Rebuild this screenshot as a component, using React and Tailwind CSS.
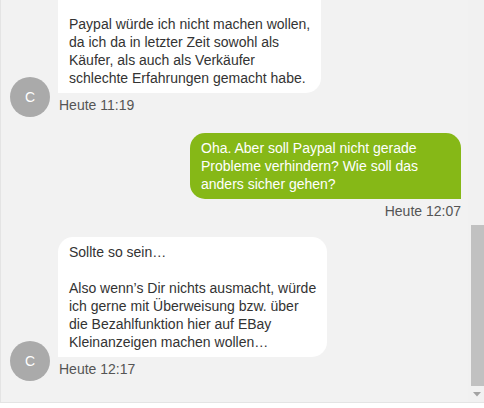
import React from 'react';

const Avatar = () => (
  <div className="w-[40px] h-[40px] shrink-0 rounded-full bg-[#aaaaaa] flex items-center justify-center text-white text-[14px]">
    C
  </div>
);

const Incoming = ({ lines, time, className = '', topPad = 'pt-[6px]', rounded = 'rounded-[15px] rounded-bl-none' }) => (
  <div className={`flex items-end gap-[8px] ${className}`}>
    <Avatar />
    <div className="flex flex-col items-start pb-[3px]">
      <div className={`bg-white text-[#333333] ${topPad} pb-[6px] px-[11px] ${rounded}`}>
        {lines.map((line, i) => (
          <div key={i} className="h-[18px] whitespace-nowrap">
            {line}
          </div>
        ))}
      </div>
      <div className="mt-[3px] ml-[1px] text-[#555555]">{time}</div>
    </div>
  </div>
);

const Outgoing = ({ lines, time, className = '' }) => (
  <div className={`flex flex-col items-end pr-[1px] ${className}`}>
    <div className="w-[271px] bg-[#86b817] text-white py-[6px] px-[11px] rounded-[15px] rounded-br-none">
      {lines.map((line, i) => (
        <div key={i} className="h-[18px] whitespace-nowrap">
          {line}
        </div>
      ))}
    </div>
    <div className="mt-[3px] text-[#555555]">{time}</div>
  </div>
);

export default function App() {
  return (
    <div className="w-[484px] h-[408px] bg-white flex flex-col overflow-hidden font-['Liberation_Sans',Arial,sans-serif] text-[14px] leading-[18px]">
      <div className="h-[403px] flex border-l border-[#e4e4e4] border-b bg-[#f2f2f2]">
        <div className="flex-1 pl-[9px] pr-[6px] overflow-hidden">
          <Incoming
            topPad="pt-[15px]"
            rounded="rounded-br-[15px]"
            time="Heute 11:19"
            lines={[
              'Paypal würde ich nicht machen wollen,',
              'da ich da in letzter Zeit sowohl als',
              'Käufer, als auch als Verkäufer',
              'schlechte Erfahrungen gemacht habe.',
            ]}
          />
          <Outgoing
            className="mt-[16px]"
            time="Heute 12:07"
            lines={[
              'Oha. Aber soll Paypal nicht gerade',
              'Probleme verhindern? Wie soll das',
              'anders sicher gehen?',
            ]}
          />
          <Incoming
            className="mt-[17px]"
            time="Heute 12:17"
            lines={[
              'Sollte so sein…',
              '',
              'Also wenn’s Dir nichts ausmacht, würde',
              'ich gerne mit Überweisung bzw. über',
              'die Bezahlfunktion hier auf EBay',
              'Kleinanzeigen machen wollen…',
            ]}
          />
        </div>
        {/* scrollbar */}
        <div className="w-[16px] shrink-0 bg-[#f1f1f1] flex flex-col">
          <div className="h-[225px]" />
          <div className="h-[161px] ml-[3px] bg-[#c1c1c1]" />
          <div className="flex-1 flex items-center justify-center pl-[2px]">
            <svg width="8" height="5" viewBox="0 0 8 5">
              <path d="M0 0 H8 L4 4.5 Z" fill="#a3a3a3" />
            </svg>
          </div>
        </div>
      </div>
    </div>
  );
}
